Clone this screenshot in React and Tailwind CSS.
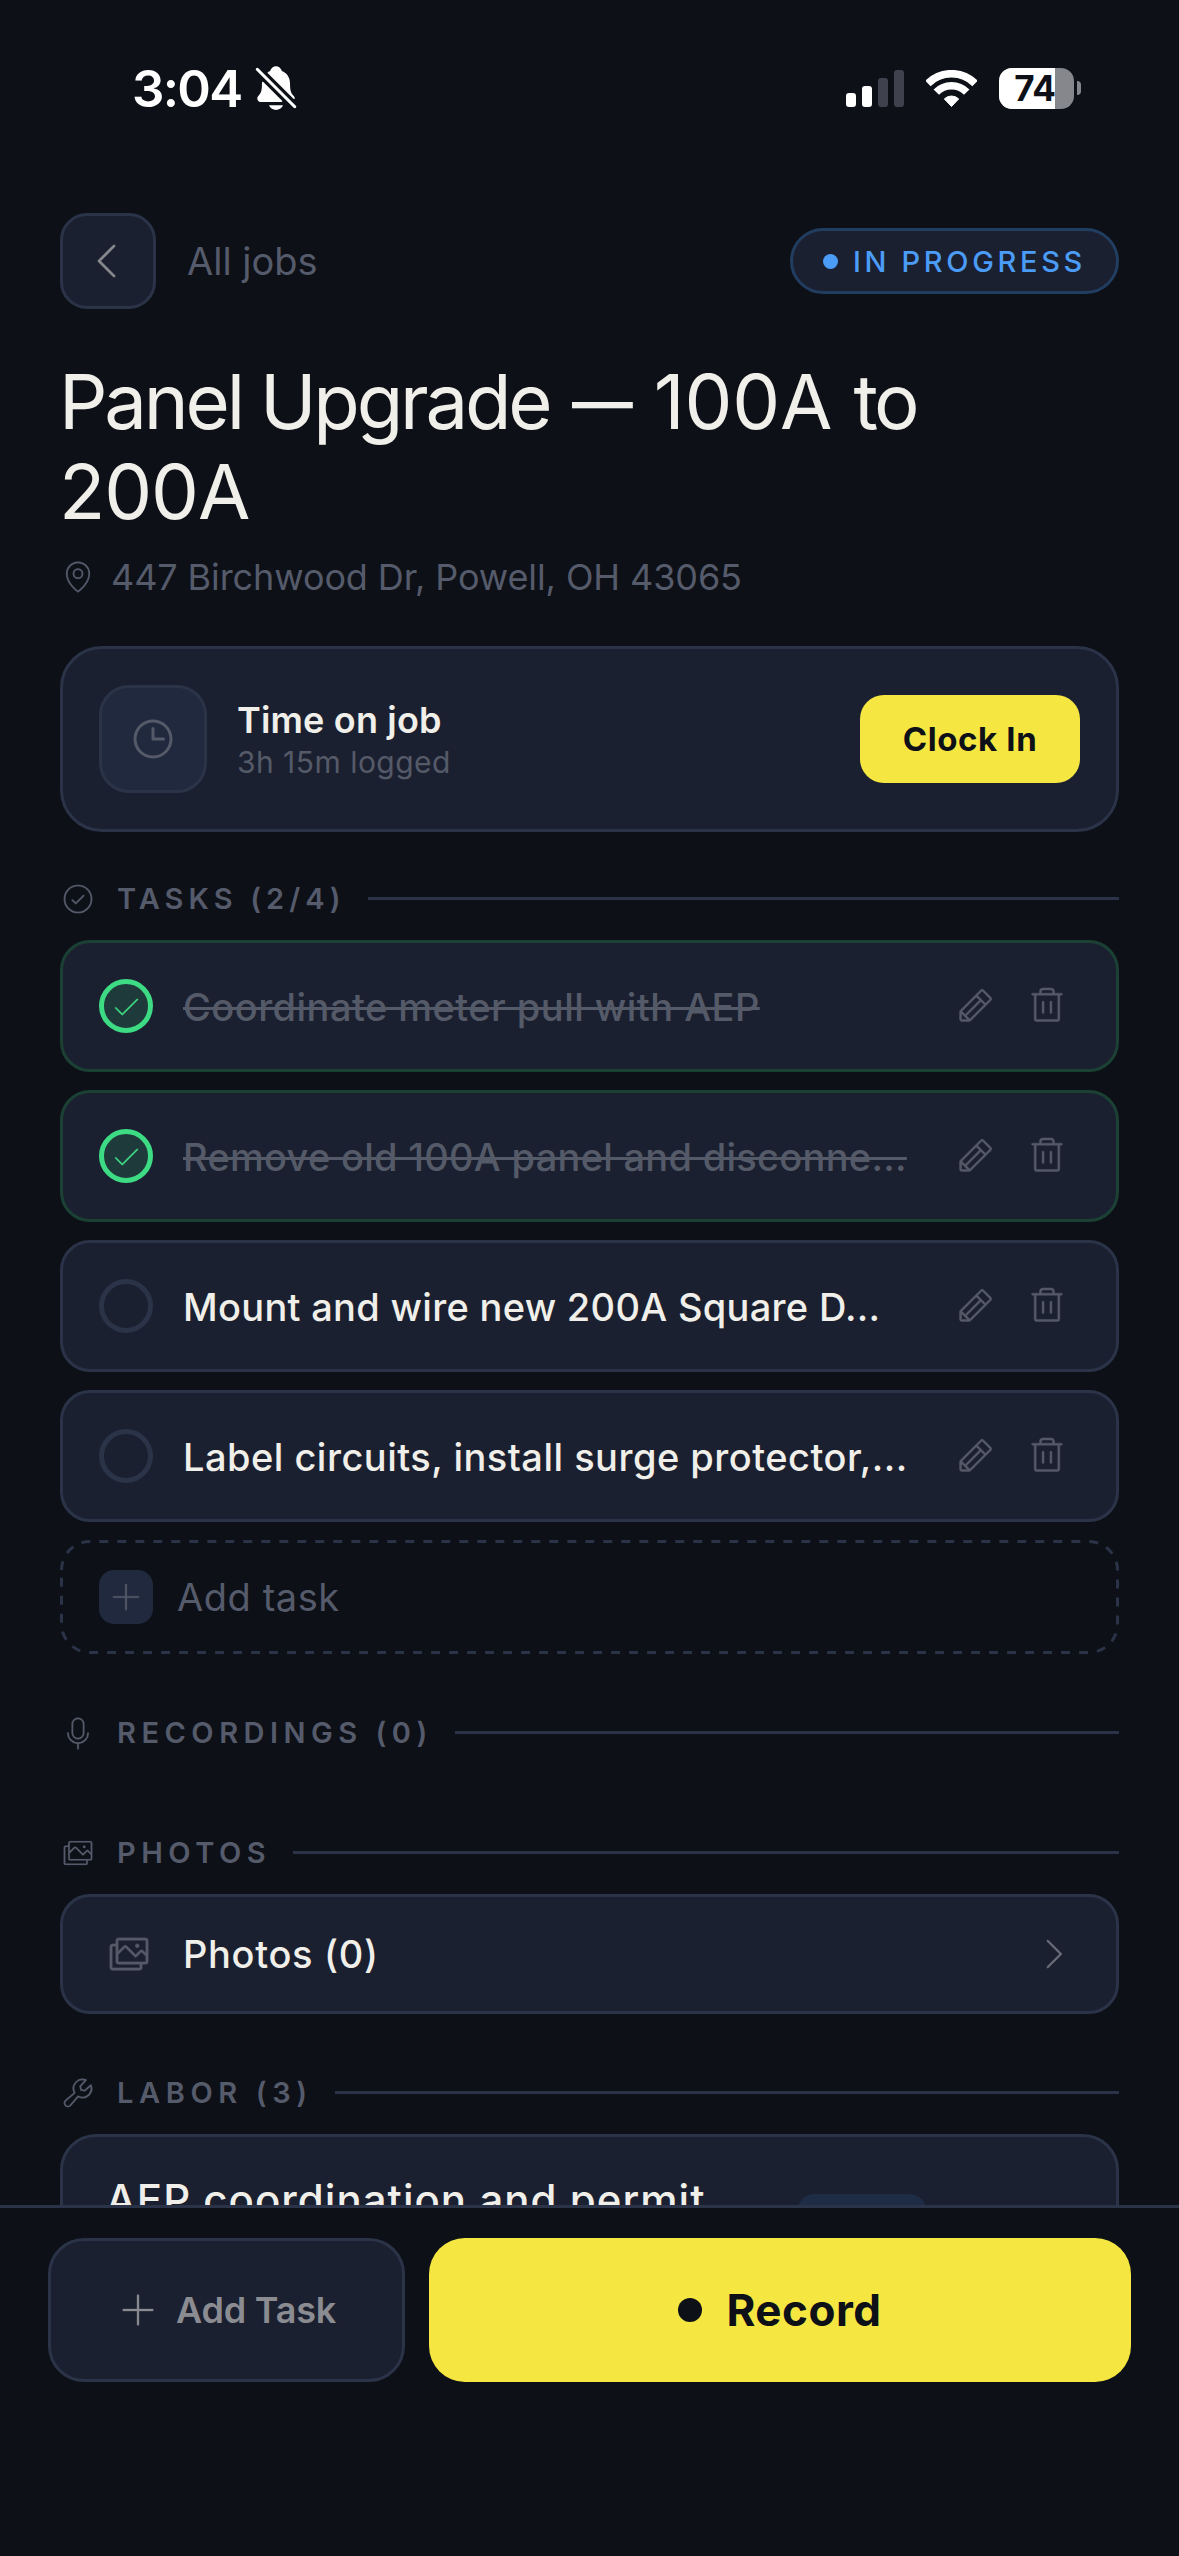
import {
    PiCaretLeftLight,
    PiCaretRightLight,
    PiCheckCircleLight,
    PiCheckLight,
    PiClock,
    PiImagesLight,
    PiMapPinLight,
    PiMicrophoneLight,
    PiPencilLight,
    PiPlusLight,
    PiTrashLight,
    PiWrenchLight,
} from "react-icons/pi";
import { IoNotificationsOff } from "react-icons/io5";

const tasks = [
    { id: 1, title: "Coordinate meter pull with AEP", done: true, tracking: "tracking-[0.46px]" },
    { id: 2, title: "Remove old 100A panel and disconne...", done: true, tracking: "tracking-[0.28px]" },
    { id: 3, title: "Mount and wire new 200A Square D...", done: false, tracking: "tracking-[0.3px]" },
    { id: 4, title: "Label circuits, install surge protector,...", done: false, tracking: "tracking-[0.48px]" },
];

const StatusBar = () => (
    <div className="flex h-[176px] shrink-0 items-center justify-between pr-[98px] pl-[132px] text-white">
        <div className="flex items-center">
            <span className="text-[51px] leading-none font-semibold tracking-[-1.7px]">3:04</span>
            <IoNotificationsOff className="ml-[9px] size-[50px]" />
        </div>
        <div className="flex items-center gap-[22px]">
            {/* Signal */}
            <svg width="58" height="37" viewBox="0 0 58 37" fill="#fff">
                <rect x="0" y="23" width="10" height="14" rx="3" />
                <rect x="16" y="16" width="10" height="21" rx="3" />
                <rect x="32" y="8" width="10" height="29" rx="3" fill="#3f424d" />
                <rect x="48" y="0" width="10" height="37" rx="3" fill="#3f424d" />
            </svg>
            {/* Wifi */}
            <svg width="51" height="37" viewBox="0 0 51 37" fill="none" stroke="#fff" strokeWidth="7.6">
                <path d="M1.95 13.45a33.3 33.3 0 0 1 47.1 0" />
                <path d="M10.3 22.2a21.2 21.2 0 0 1 30.4 0" />
                <path d="M25.5 36.5l-7.2-7.6a10.4 10.4 0 0 1 14.4 0z" fill="#fff" strokeWidth="1" strokeLinejoin="round" />
            </svg>
            {/* Battery */}
            <div className="flex items-center gap-[3px]">
                <div className="relative flex h-[41px] w-[75px] overflow-hidden rounded-[13px] bg-[#85878d]">
                    <div className="w-[56px] bg-white" />
                    <span className="absolute inset-0 flex items-center justify-center pr-[3px] text-[35px] leading-none font-bold tracking-[-0.3px] text-[#0d1017]">
                        74
                    </span>
                </div>
                <div className="h-[14px] w-1 rounded-r-full bg-[#85878d]" />
            </div>
        </div>
    </div>
);

const SectionHeader = ({ icon: Icon, title, className }) => (
    <div className="flex h-[37px] items-center">
        <Icon className="size-9 shrink-0 stroke-1 text-[#555b6b]" />
        <span className={`ml-[21px] text-[29px] leading-none font-semibold whitespace-nowrap text-[#555b6b] ${className}`}>
            {title}
        </span>
        <div className="ml-[22px] h-[3px] flex-1 bg-[#2a3347]" />
    </div>
);

const TaskRow = ({ task }) => (
    <div
        className={`flex h-[132px] items-center rounded-[30px] border-3 bg-[#1b2030] px-9 ${
            task.done ? "border-[#1b4034]" : "border-[#2a3347]"
        }`}
    >
        <div
            className={`flex size-[54px] shrink-0 items-center justify-center rounded-full border-[5.5px] ${
                task.done ? "border-[#3ddc84] bg-[#1f3a3b]" : "border-[#2a3347]"
            }`}
        >
            {task.done && <PiCheckLight className="size-[30px] stroke-3 text-[#3ddc84]" />}
        </div>
        <div className="ml-[30px] min-w-0 flex-1 pt-[2px]">
            <span
                className={`text-[38px] leading-[48px] font-medium whitespace-nowrap ${task.tracking} ${
                    task.done ? "text-[#555a68] line-through decoration-[#555a68] decoration-3" : "text-[#f0efe9]"
                }`}
            >
                {task.title}
            </span>
        </div>
        <div className="flex shrink-0 gap-1.5 text-[#555a68]">
            <button className="p-3">
                <PiPencilLight className="size-[42px] stroke-3" />
            </button>
            <button className="p-3">
                <PiTrashLight className="size-[42px] stroke-3" />
            </button>
        </div>
    </div>
);

export default function App() {
    return (
        <div className="flex h-[2556px] w-[1179px] flex-col overflow-hidden bg-[#0d1017] font-['Inter',sans-serif]">
            <div className="flex h-[2205px] flex-col overflow-hidden">
                <StatusBar />

                <div className="px-[60px] pt-[37px]">
                    {/* Back + status */}
                    <div className="flex h-24 items-center">
                        <button className="flex size-24 items-center justify-center rounded-[27px] border-3 border-[#2a3347] bg-[#1b2030]">
                            <PiCaretLeftLight className="size-12 stroke-3 text-[#8b8c91]" />
                        </button>
                        <span className="ml-[31px] text-[38px] leading-none text-[#555b6b]">All jobs</span>
                        <div className="ml-auto flex h-[66px] items-center gap-[15px] rounded-full border-3 border-[#213d60] bg-[#1b2030] px-[30px]">
                            <div className="size-[15px] rounded-full bg-[#4b9cf7]" />
                            <span className="text-[29px] leading-none font-medium tracking-[3.68px] text-[#4b9cf7]">IN PROGRESS</span>
                        </div>
                    </div>

                    <h1 className="mt-[47px] -ml-px text-[76px] leading-[90px] font-normal text-[#f0efe9]">
                        <span className="tracking-[-3.2px]">Panel Upgrade </span>
                        <span className="mr-[-15px] ml-1 inline-block origin-left scale-x-80">—</span>
                        <span className="tracking-[-0.2px]"> 100A </span>
                        <span className="tracking-[-3.5px]">to</span>
                        <br />
                        <span className="tracking-[-1.1px]">200A</span>
                    </h1>
                    <div className="mt-[23px] flex h-9 items-center text-[#555b6b]">
                        <PiMapPinLight className="size-9 stroke-1" />
                        <span className="ml-[15px] text-[36px] leading-none tracking-[-0.1px]">447 Birchwood Dr, Powell, OH 43065</span>
                    </div>

                    {/* Time on job */}
                    <div className="mt-[51px] flex h-[186px] items-center rounded-[42px] border-3 border-[#2a3347] bg-[#1b2030] px-9">
                        <div className="flex size-[108px] items-center justify-center rounded-[30px] border-3 border-[#2a3347] bg-[#20293d]">
                            <PiClock className="size-12 text-[#555a68]" />
                        </div>
                        <div className="ml-[30px] pb-[2px]">
                            <div className="text-[36px] leading-[48px] font-semibold tracking-[0.17px] text-[#f0efe9]">Time on job</div>
                            <div className="text-[30px] leading-[36px] tracking-[0.47px] text-[#555a68]">3h 15m logged</div>
                        </div>
                        <button className="ml-auto h-[88px] w-[220px] rounded-[24px] bg-[#f5e642] text-[33px] leading-none font-bold tracking-[0.6px] text-[#0d1017]">
                            Clock In
                        </button>
                    </div>

                    {/* Tasks */}
                    <div className="mt-12">
                        <SectionHeader icon={PiCheckCircleLight} title="TASKS (2/4)" className="tracking-[5.1px]" />
                        <div className="mt-[23px] flex flex-col gap-[18px]">
                            {tasks.map((task) => (
                                <TaskRow key={task.id} task={task} />
                            ))}
                            <button className="relative flex h-[114px] items-center pl-[39px]">
                                <svg
                                    className="absolute inset-0"
                                    width="1059"
                                    height="114"
                                    viewBox="0 0 1059 114"
                                    fill="none"
                                    stroke="#2a3347"
                                    strokeWidth="3"
                                    strokeDasharray="9 9"
                                >
                                    <path d="M1.5 30A28.5 28.5 0 0 1 30 1.5H1029A28.5 28.5 0 0 1 1057.5 30V84A28.5 28.5 0 0 1 1029 112.5H30A28.5 28.5 0 0 1 1.5 84Z" />
                                </svg>
                                <div className="flex size-[54px] items-center justify-center rounded-[15px] bg-[#20293d]">
                                    <PiPlusLight className="size-9 stroke-2 text-[#555a68]" />
                                </div>
                                <span className="ml-6 text-[38px] leading-none tracking-[0.55px] text-[#555b6b]">Add task</span>
                            </button>
                        </div>
                    </div>

                    {/* Recordings */}
                    <div className="mt-[60px]">
                        <SectionHeader icon={PiMicrophoneLight} title="RECORDINGS (0)" className="tracking-[5.5px]" />
                    </div>

                    {/* Photos */}
                    <div className="mt-[83px]">
                        <SectionHeader icon={PiImagesLight} title="PHOTOS" className="tracking-[5.5px]" />
                        <div className="mt-[23px] flex h-[120px] items-center rounded-[30px] border-3 border-[#2a3347] bg-[#1b2030] px-[42px]">
                            <PiImagesLight className="size-12 stroke-3 text-[#555a68]" />
                            <span className="ml-[30px] text-[38px] leading-none font-medium tracking-[0.68px] text-[#f0efe9]">Photos (0)</span>
                            <PiCaretRightLight className="ml-auto size-[42px] stroke-2 text-[#6a6e79]" />
                        </div>
                    </div>

                    {/* Labor */}
                    <div className="mt-[60px]">
                        <SectionHeader icon={PiWrenchLight} title="LABOR (3)" className="tracking-[5.6px]" />
                        <div className="mt-[23px] flex h-[200px] items-start rounded-[36px] border-3 border-[#2a3347] bg-[#1b2030] pl-[43px]">
                            <span className="mt-9 text-[42px] leading-[54px] font-medium tracking-[1.02px] whitespace-nowrap text-[#f0efe9]">
                                AEP coordination and permit
                            </span>
                            <div className="mt-[57px] mr-[189px] ml-auto h-[54px] w-[130px] rounded-[18px] bg-[#1e2d45]" />
                        </div>
                    </div>
                </div>
            </div>

            {/* Bottom actions */}
            <div className="flex flex-1 gap-6 border-t-3 border-[#2a3347] bg-[#0d1017] px-12 pt-[30px]">
                <button className="flex h-36 w-[357px] items-center justify-center gap-[17px] rounded-[36px] border-3 border-[#2a3347] bg-[#1b2030] text-[#8b8c91]">
                    <PiPlusLight className="size-[42px] stroke-2" />
                    <span className="text-[36px] leading-none font-semibold tracking-[-0.2px]">Add Task</span>
                </button>
                <button className="flex h-36 flex-1 items-center justify-center gap-6 rounded-[36px] bg-[#f5e642] text-[#0d1017]">
                    <span className="size-6 rounded-full bg-[#0d1017]" />
                    <span className="text-[44px] leading-none font-bold tracking-[0.5px]">Record</span>
                </button>
            </div>
        </div>
    );
}
